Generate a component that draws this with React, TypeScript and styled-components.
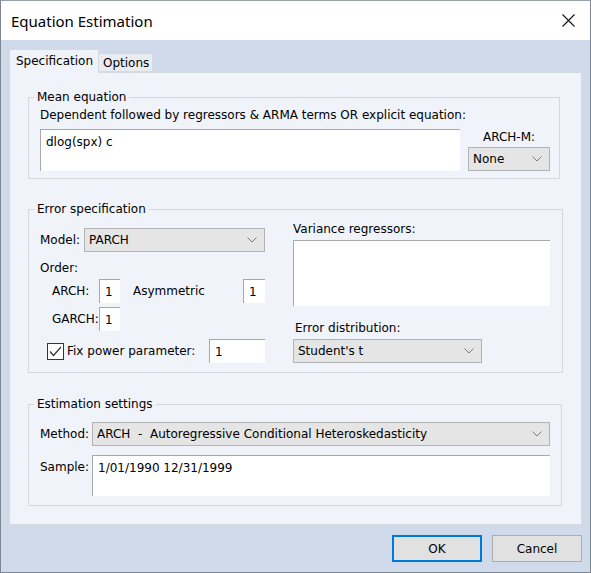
import styled, { createGlobalStyle } from "styled-components";

const GlobalStyle = createGlobalStyle`
  html, body {
    margin: 0;
    padding: 0;
    background: #cfdaea;
  }
  * {
    box-sizing: border-box;
  }
`;

const UI_FONT = `"DejaVu Sans", "Liberation Sans", sans-serif`;

const Window = styled.div`
  width: 591px;
  height: 573px;
  display: flex;
  flex-direction: column;
  background: #cfdaea;
  border: 1px solid #7d8794;
  border-top-color: #9aa0a8;
  font-family: ${UI_FONT};
  font-size: 12px;
  line-height: 14px;
  color: #000;
`;

const TitleBar = styled.div`
  height: 39px;
  flex: none;
  background: #fff;
  display: flex;
  align-items: center;
  justify-content: space-between;
  padding: 0 15px 0 10px;
`;

const Title = styled.div`
  font-family: "Noto Sans", "Open Sans", sans-serif;
  font-size: 15px;
  color: #000;
`;

const CloseButton = styled.div`
  width: 14px;
  height: 14px;
  display: flex;
  align-items: center;
  justify-content: center;
`;

const Body = styled.div`
  flex: 1;
  display: flex;
  flex-direction: column;
  padding: 9px 8px 0 8px;
`;

const TabRow = styled.div`
  height: 23px;
  display: flex;
  align-items: flex-end;
`;

const Tab = styled.div<{ $active?: boolean; $width: number }>`
  width: ${(p) => p.$width}px;
  height: ${(p) => (p.$active ? 24 : 19)}px;
  margin-bottom: ${(p) => (p.$active ? -1 : 0)}px;
  position: relative;
  z-index: ${(p) => (p.$active ? 1 : 0)};
  background: ${(p) => (p.$active ? "#f0f3f9" : "#e9ecf1")};
  border: 1px solid #d6dae0;
  border-bottom: ${(p) => (p.$active ? "none" : "1px solid #d6dae0")};
  border-left: ${(p) => (p.$active ? "1px solid #d6dae0" : "none")};
  padding: ${(p) => (p.$active ? "4px 0 0 6px" : "2px 0 0 4px")};
  white-space: nowrap;
`;

const Panel = styled.div`
  height: 453px;
  background: #f0f3f9;
  border: 1px solid #d6dae0;
  display: flex;
  flex-direction: column;
  padding: 17px 0 0 18px;
`;

const Group = styled.fieldset<{ $width: number; $height: number; $gap?: number }>`
  width: ${(p) => p.$width}px;
  height: ${(p) => p.$height}px;
  margin: ${(p) => p.$gap ?? 0}px 0 0 0;
  padding: 0;
  border: 1px solid #d5dae2;
  min-width: 0;
`;

const Legend = styled.legend`
  margin-left: 5px;
  padding: 0 3px;
  line-height: 14px;
`;

const GroupInner = styled.div<{ $pad: string }>`
  padding: ${(p) => p.$pad};
`;

const Text = styled.div<{ $top?: number; $left?: number; $center?: boolean }>`
  line-height: 14px;
  margin-top: ${(p) => p.$top ?? 0}px;
  margin-left: ${(p) => p.$left ?? 0}px;
  text-align: ${(p) => (p.$center ? "center" : "left")};
  white-space: nowrap;
`;

const Row = styled.div<{ $top?: number; $pad?: number; $align?: string }>`
  display: flex;
  align-items: ${(p) => p.$align ?? "center"};
  margin-top: ${(p) => p.$top ?? 0}px;
  padding-left: ${(p) => p.$pad ?? 0}px;
`;

const Label = styled.div<{ $width?: number; $top?: number; $left?: number }>`
  width: ${(p) => (p.$width ? `${p.$width}px` : "auto")};
  flex: none;
  padding-top: ${(p) => p.$top ?? 0}px;
  margin-left: ${(p) => p.$left ?? 0}px;
  white-space: nowrap;
`;

const Edit = styled.div<{ $width?: number; $height: number; $top?: number; $push?: boolean }>`
  width: ${(p) => (p.$width ? `${p.$width}px` : "auto")};
  flex: ${(p) => (p.$width ? "none" : "1")};
  height: ${(p) => p.$height}px;
  margin-left: ${(p) => (p.$push ? "auto" : "0")};
  margin-top: ${(p) => p.$top ?? 0}px;
  background: #fff;
  border-top: 1px solid #a9a9a9;
  border-left: 1px solid #a9a9a9;
  padding: 5px 0 0 5px;
  white-space: nowrap;
`;

const Select = styled.div<{ $width?: number; $height?: number; $top?: number }>`
  width: ${(p) => (p.$width ? `${p.$width}px` : "auto")};
  flex: ${(p) => (p.$width ? "none" : "1")};
  height: ${(p) => p.$height ?? 24}px;
  margin-top: ${(p) => p.$top ?? 0}px;
  background: #e5e5e5;
  border: 1px solid #b3b3b3;
  display: flex;
  align-items: center;
  justify-content: space-between;
  padding: 0 7px 0 4px;
  white-space: pre;
`;

const ErrorGrid = styled.div`
  display: grid;
  grid-template-columns: 225px 257px;
  column-gap: 28px;
  padding: 6px 0 0 11px;
`;

const Column = styled.div<{ $top?: number }>`
  display: flex;
  flex-direction: column;
  margin-top: ${(p) => p.$top ?? 0}px;
`;

const Checkbox = styled.div`
  width: 17px;
  height: 17px;
  flex: none;
  background: #fff;
  border: 1px solid #333;
  display: flex;
  align-items: center;
  justify-content: center;
  margin-right: 3px;
`;

const Footer = styled.div`
  display: flex;
  justify-content: flex-end;
  gap: 10px;
  padding-top: 10px;
`;

const Button = styled.div<{ $default?: boolean }>`
  width: 90px;
  height: 27px;
  background: #e1e1e1;
  border: ${(p) => (p.$default ? "2px solid #0078d7" : "1px solid #adadad")};
  display: flex;
  align-items: center;
  justify-content: center;
`;

const Chevron = () => (
  <svg width="10" height="6" viewBox="0 0 10 6">
    <path d="M0.5 0.5 L5 5 L9.5 0.5" fill="none" stroke="#7a7a7a" strokeWidth="1" />
  </svg>
);

const Drop = ({ value, ...rest }: { value: string; $width?: number; $height?: number; $top?: number }) => (
  <Select {...rest}>
    <span>{value}</span>
    <Chevron />
  </Select>
);

export default function App() {
  return (
    <>
      <GlobalStyle />
      <Window>
        <TitleBar>
          <Title>Equation Estimation</Title>
          <CloseButton>
            <svg width="13" height="13" viewBox="0 0 13 13">
              <path d="M0.5 0.5 L12.5 12.5 M12.5 0.5 L0.5 12.5" stroke="#111" strokeWidth="1.1" />
            </svg>
          </CloseButton>
        </TitleBar>
        <Body>
          <TabRow>
            <Tab $active $width={90}>Specification</Tab>
            <Tab $width={54}>Options</Tab>
          </TabRow>
          <Panel>
            <Group $width={532} $height={89}>
              <Legend>Mean equation</Legend>
              <GroupInner $pad="4px 0 0 11px">
                <Text>Dependent followed by regressors &amp; ARMA terms OR explicit equation:</Text>
                <Row $top={7} $align="flex-start">
                  <Edit $width={420} $height={42}>dlog(spx) c</Edit>
                  <Column $top={1}>
                    <Text $left={8} $center>ARCH-M:</Text>
                    <Row $top={3} $pad={8}>
                      <Drop value="None" $width={82} $height={24} />
                    </Row>
                  </Column>
                </Row>
              </GroupInner>
            </Group>

            <Group $width={535} $height={171} $gap={23}>
              <Legend>Error specification</Legend>
              <ErrorGrid>
                <Column $top={6}>
                  <Row>
                    <Label $width={44}>Model:</Label>
                    <Drop value="PARCH" />
                  </Row>
                  <Text $top={9}>Order:</Text>
                  <Row $top={4} $pad={12}>
                    <Label $width={47}>ARCH:</Label>
                    <Edit $width={21} $height={24}>1</Edit>
                    <Label $left={13}>Asymmetric</Label>
                    <Edit $width={22} $height={24} $push>1</Edit>
                  </Row>
                  <Row $top={4} $pad={12}>
                    <Label $width={47}>GARCH:</Label>
                    <Edit $width={21} $height={24}>1</Edit>
                  </Row>
                  <Row $top={8} $pad={7}>
                    <Checkbox>
                      <svg width="13" height="11" viewBox="0 0 13 11">
                        <path d="M1 5.5 L4.5 9.5 L12 1" fill="none" stroke="#333" strokeWidth="1.2" />
                      </svg>
                    </Checkbox>
                    <Label>Fix power parameter:</Label>
                    <Edit $width={56} $height={24} $push>1</Edit>
                  </Row>
                </Column>
                <Column>
                  <Text>Variance regressors:</Text>
                  <Edit $height={66} $top={4} />
                  <Text $top={15} $left={2}>Error distribution:</Text>
                  <Drop value="Student's t" $width={189} $top={4} />
                </Column>
              </ErrorGrid>
            </Group>

            <Group $width={534} $height={109} $gap={24}>
              <Legend>Estimation settings</Legend>
              <GroupInner $pad="11px 0 0 11px">
                <Row>
                  <Label $width={52}>Method:</Label>
                  <Drop value="ARCH  -  Autoregressive Conditional Heteroskedasticity" $width={458} />
                </Row>
                <Row $top={9} $align="flex-start">
                  <Label $width={52} $top={5}>Sample:</Label>
                  <Edit $width={458} $height={41}>1/01/1990 12/31/1999</Edit>
                </Row>
              </GroupInner>
            </Group>
          </Panel>
          <Footer>
            <Button $default>OK</Button>
            <Button>Cancel</Button>
          </Footer>
        </Body>
      </Window>
    </>
  );
}
